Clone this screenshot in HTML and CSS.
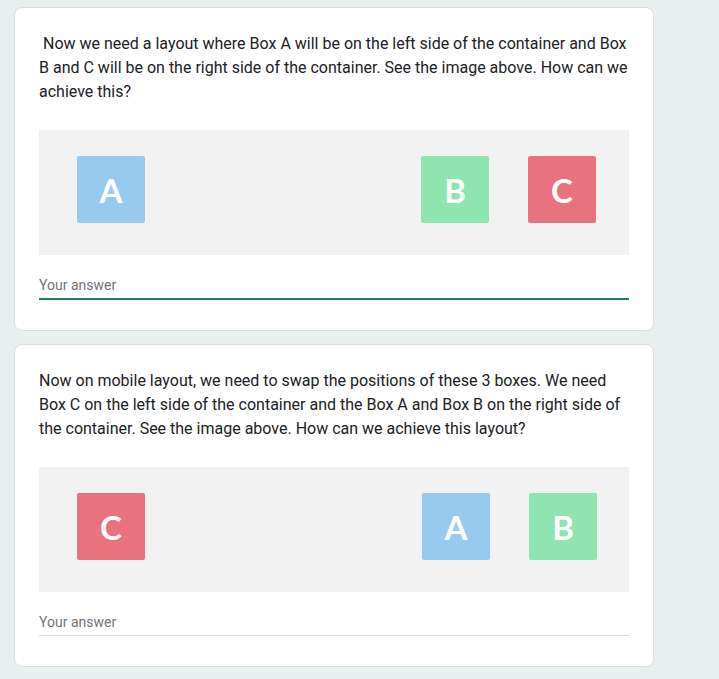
FILE: index.html
```html
<!DOCTYPE html>
<html lang="en">
<head>
<meta charset="utf-8">
<link rel="stylesheet" href="styles.css">
</head>
<body>
<main class="form">
  <section class="card">
    <p class="question">&nbsp;Now we need a layout where Box A will be on the left side of the container and Box B and C will be on the right side of the container. See the image above. How can we achieve this?</p>
    <div class="figure">
      <div class="box box-a lead">A</div>
      <div class="spacer"></div>
      <div class="box box-b">B</div>
      <div class="box box-c trail">C</div>
    </div>
    <div class="answer focused">Your answer</div>
  </section>
  <section class="card">
    <p class="question">Now on mobile layout, we need to swap the positions of these 3 boxes. We need Box C on the left side of the container and the Box A and Box B on the right side of the container. See the image above. How can we achieve this layout?</p>
    <div class="figure">
      <div class="box box-c lead">C</div>
      <div class="spacer"></div>
      <div class="box box-a">A</div>
      <div class="box box-b trail shifted">B</div>
    </div>
    <div class="answer">Your answer</div>
  </section>
</main>
</body>
</html>
```
FILE: styles.css
```css
html, body {
  margin: 0;
  padding: 0;
  background: #e8f0ef;
}
body {
  font-family: Roboto, "Liberation Sans", sans-serif;
  color: #202124;
}
.form {
  padding: 7px 14px;
  display: flex;
  flex-direction: column;
  gap: 13px;
  width: 640px;
}
.card {
  background: #fff;
  border: 1px solid #dadce0;
  border-radius: 8px;
  padding: 24px 24px 30px;
}
.question {
  margin: 0;
  font-size: 16px;
  line-height: 24px;
}
.figure {
  margin-top: 26px;
  height: 125px;
  background: #f2f2f2;
  display: flex;
  align-items: flex-start;
  padding-top: 26px;
  box-sizing: border-box;
}
.spacer {
  flex: 1;
}
.box {
  width: 68px;
  height: 67px;
  border-radius: 2px;
  display: flex;
  align-items: center;
  justify-content: center;
  color: #fff;
  font-family: Lato, "Open Sans", sans-serif;
  font-weight: 700;
  font-size: 33px;
}
.box + .box {
  margin-left: 39px;
}
.lead {
  margin-left: 38px;
}
.trail {
  margin-right: 33px;
}
.trail.shifted {
  margin-right: 32px;
}
.box-a { background: #98caf0; }
.box-b { background: #8ee5b0; }
.box-c { background: #e8727e; }
.answer {
  margin-top: 20px;
  font-size: 14px;
  line-height: 20px;
  color: #70757a;
  padding-bottom: 3px;
  border-bottom: 1px solid #dadce0;
}
.answer.focused {
  border-bottom: 2px solid #1f7a67;
}
```
